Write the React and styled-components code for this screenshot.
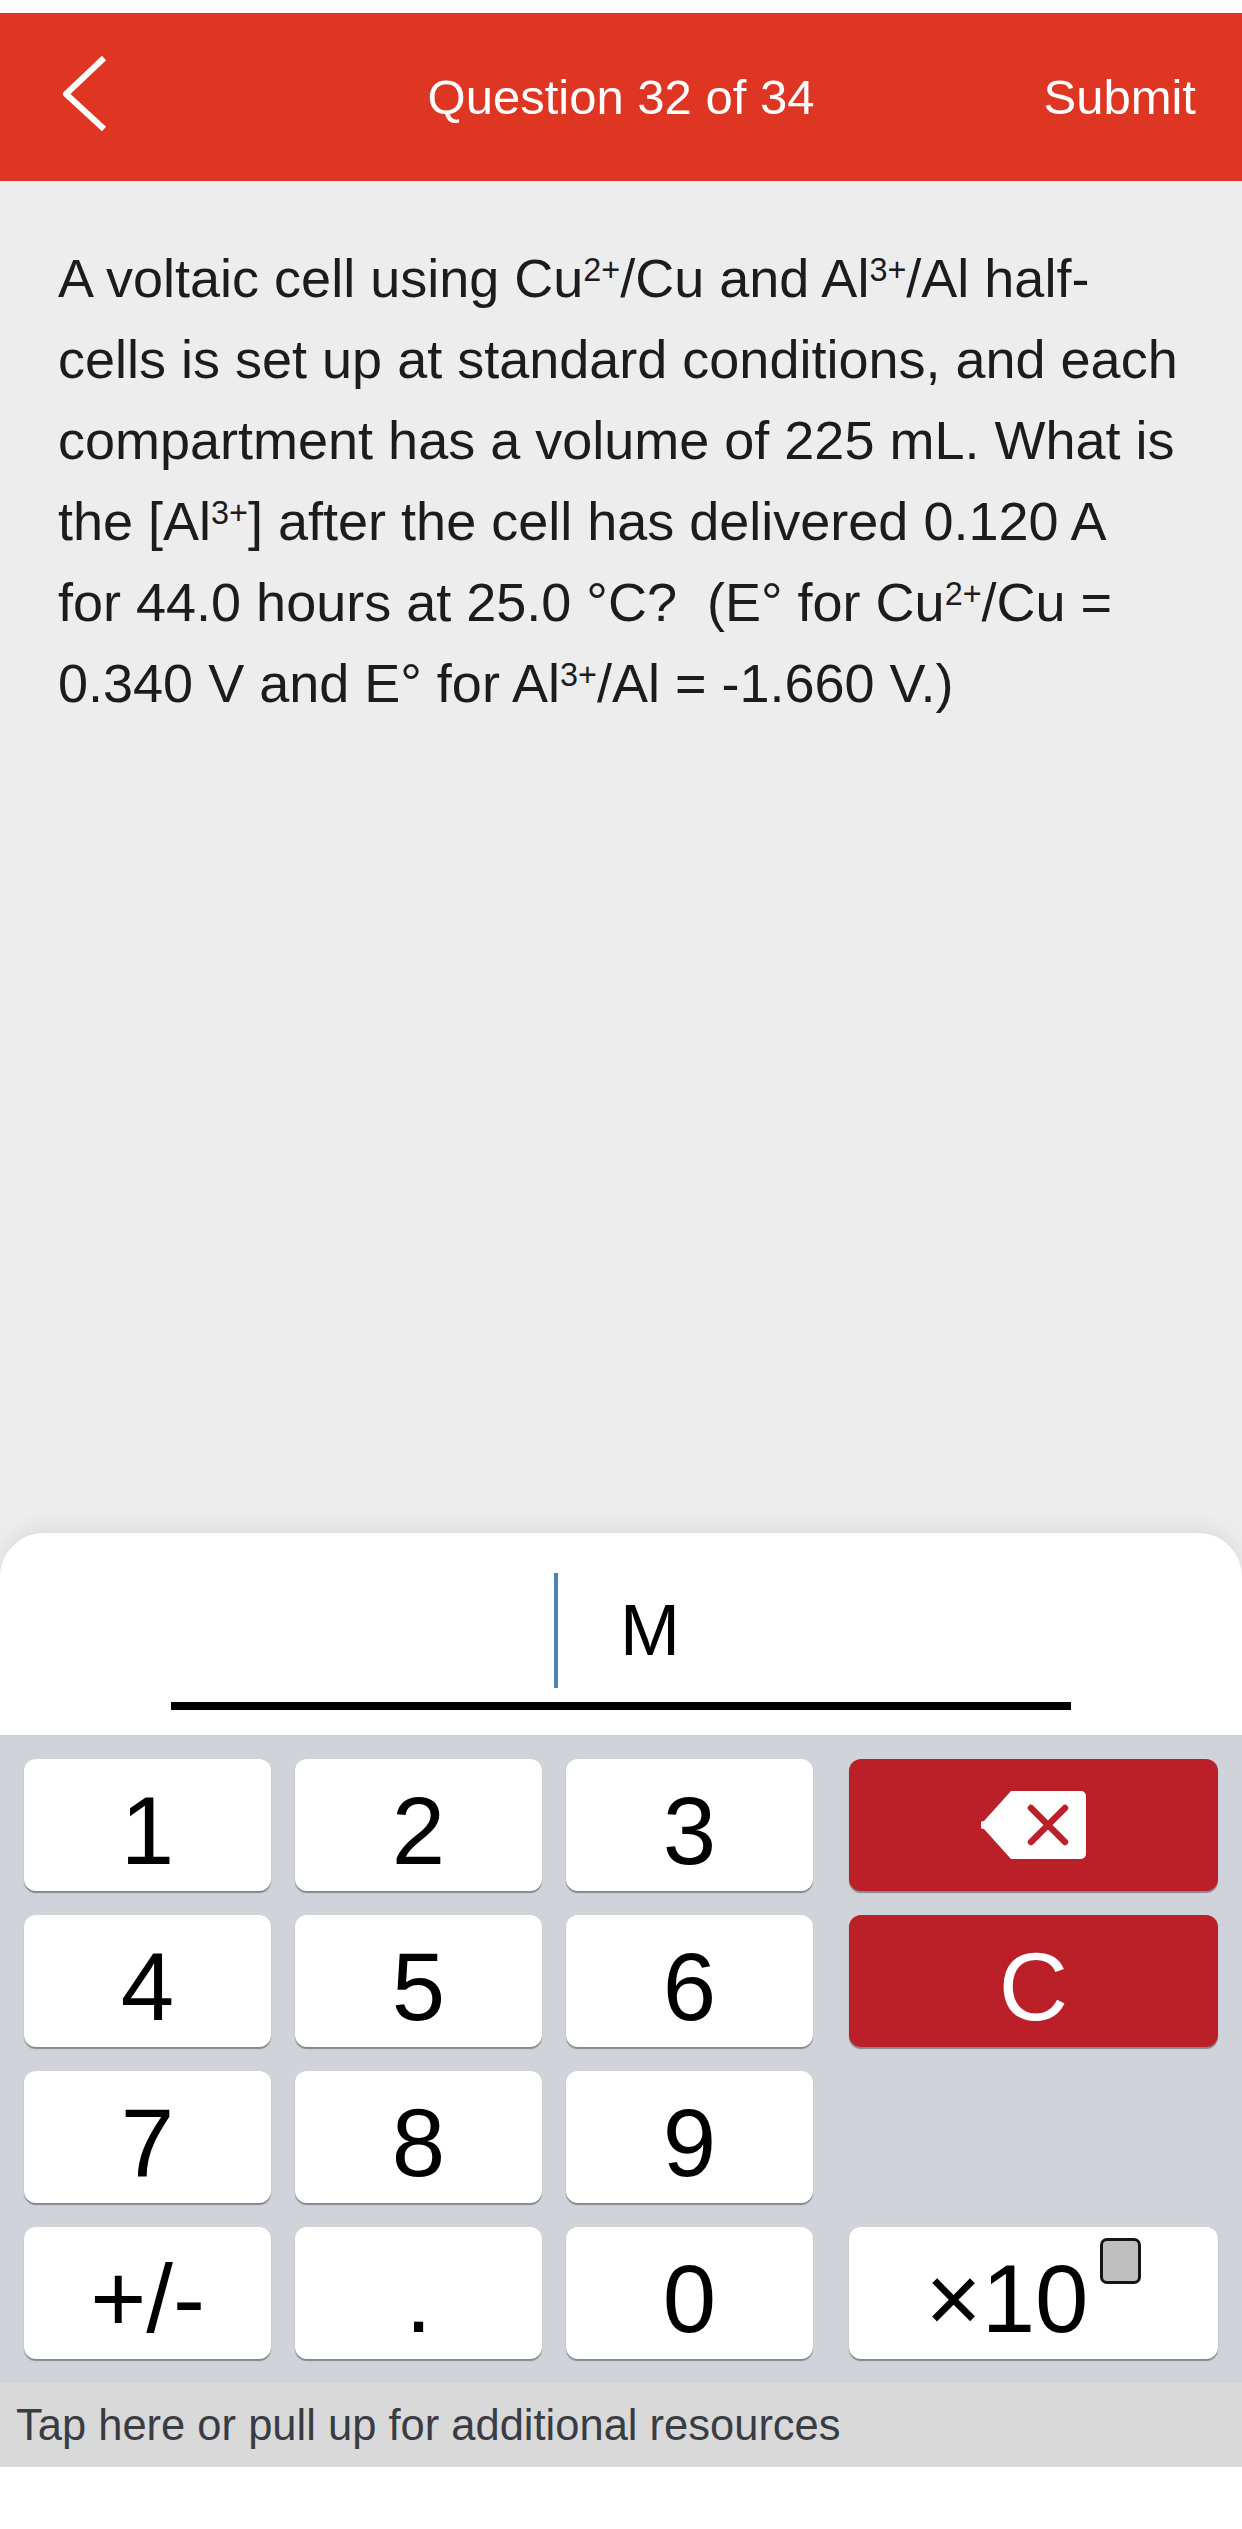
import React from 'react'
import styled, { createGlobalStyle } from 'styled-components'

const GlobalStyle = createGlobalStyle`
  html, body {
    margin: 0;
    padding: 0;
    background: #ffffff;
  }
  body {
    font-family: "Liberation Sans", Arial, sans-serif;
  }
`

const Page = styled.div`
  width: 1242px;
  height: 2529px;
  display: flex;
  flex-direction: column;
  background: #ffffff;
  overflow: hidden;
`

const StatusStrip = styled.div`
  height: 13px;
  background: #ffffff;
`

const Header = styled.header`
  height: 168px;
  background: #de3623;
  display: grid;
  grid-template-columns: 1fr auto 1fr;
  align-items: center;
  color: #ffffff;
  font-size: 49px;
`

const BackButton = styled.div`
  justify-self: start;
  margin-left: 60px;
  display: flex;
`

const Title = styled.div`
  white-space: nowrap;
`

const SubmitLink = styled.div`
  justify-self: end;
  margin-right: 46px;
`

const Main = styled.main`
  flex: 1;
  background: #ededed;
  display: flex;
  flex-direction: column;
`

const Question = styled.p`
  margin: 0;
  padding: 57px 58px 0;
  font-size: 54px;
  line-height: 81px;
  color: #1c1c1e;
  white-space: nowrap;
`

const Sup = styled.sup`
  font-size: 0.6em;
  line-height: 0;
  vertical-align: 0.48em;
`

const AnswerPanel = styled.section`
  margin-top: auto;
  height: 202px;
  box-sizing: border-box;
  padding-top: 40px;
  background: #ffffff;
  border-radius: 44px 44px 0 0;
  box-shadow: 0 -6px 22px rgba(0, 0, 0, 0.07);
`

const InputRow = styled.div`
  height: 115px;
  display: flex;
  justify-content: center;
  align-items: flex-start;
  padding-right: 8px;
`

const Caret = styled.div`
  width: 4px;
  height: 115px;
  background: #4b82b8;
`

const Unit = styled.span`
  margin-left: 62px;
  margin-top: 21px;
  font-size: 72px;
  line-height: 72px;
  color: #000000;
`

const Underline = styled.div`
  width: 900px;
  height: 8px;
  margin: 14px auto 0;
  background: #000000;
`

const Keypad = styled.div`
  background: #d1d3da;
  padding: 24px;
  display: grid;
  grid-template-columns: 247px 247px 247px 1fr;
  grid-auto-rows: 132px;
  column-gap: 24px;
  row-gap: 24px;
`

const Key = styled.div`
  box-sizing: border-box;
  width: ${p => (p.$wide ? '369px' : 'auto')};
  justify-self: ${p => (p.$wide ? 'end' : 'stretch')};
  display: flex;
  align-items: center;
  justify-content: center;
  padding-top: 12px;
  border-radius: 12px;
  background: ${p => (p.$red ? '#bb2029' : '#ffffff')};
  color: ${p => (p.$red ? '#ffffff' : '#000000')};
  box-shadow: 0 2px 1px rgba(70, 72, 78, 0.55);
  font-size: 96px;
  line-height: 96px;
`

const IconKey = styled(Key)`
  padding-top: 0;
`

const EmptyCell = styled.div``

const Exponent = styled.div`
  display: flex;
  align-items: flex-start;
`

const ExpBox = styled.div`
  width: 41px;
  height: 46px;
  box-sizing: border-box;
  margin-top: -13px;
  margin-left: 12px;
  border: 3px solid #151515;
  border-radius: 7px;
  background: #bfbfbf;
`

const ResourceBar = styled.div`
  height: 84px;
  background: #d9d9d9;
  display: flex;
  align-items: center;
  padding-left: 16px;
  font-size: 43.5px;
  color: #3a3c44;
`

const Footer = styled.div`
  height: 62px;
  background: #ffffff;
`

const Chevron = () => (
  <svg width="50" height="86" viewBox="0 0 50 86">
    <path
      d="M44 4 L6 40 L44 75"
      fill="none"
      stroke="#ffffff"
      strokeWidth="6"
      strokeLinejoin="round"
    />
  </svg>
)

const BackspaceIcon = () => (
  <svg width="106" height="70" viewBox="0 0 106 70">
    <path
      d="M30 1 H100 A5 5 0 0 1 105 6 V64 A5 5 0 0 1 100 69 H30 L3 39 A4 4 0 0 1 3 31 Z"
      fill="#ffffff"
    />
    <path
      d="M50 18 L84 52 M84 18 L50 52"
      stroke="#bb2029"
      strokeWidth="6.5"
      strokeLinecap="round"
    />
  </svg>
)

const App = () => {
  return (
    <Page>
      <GlobalStyle />
      <StatusStrip />
      <Header>
        <BackButton>
          <Chevron />
        </BackButton>
        <Title>Question 32 of 34</Title>
        <SubmitLink>Submit</SubmitLink>
      </Header>
      <Main>
        <Question>
          A voltaic cell using Cu<Sup>2+</Sup>/Cu and Al<Sup>3+</Sup>/Al half-
          <br />
          cells is set up at standard conditions, and each
          <br />
          compartment has a volume of 225 mL. What is
          <br />
          the [Al<Sup>3+</Sup>] after the cell has delivered 0.120 A
          <br />
          for 44.0 hours at 25.0 °C?&nbsp; (E° for Cu<Sup>2+</Sup>/Cu =
          <br />
          0.340 V and E° for Al<Sup>3+</Sup>/Al = -1.660 V.)
        </Question>
        <AnswerPanel>
          <InputRow>
            <Caret />
            <Unit>M</Unit>
          </InputRow>
          <Underline />
        </AnswerPanel>
      </Main>
      <Keypad>
        <Key>1</Key>
        <Key>2</Key>
        <Key>3</Key>
        <IconKey $red $wide>
          <BackspaceIcon />
        </IconKey>
        <Key>4</Key>
        <Key>5</Key>
        <Key>6</Key>
        <Key $red $wide>C</Key>
        <Key>7</Key>
        <Key>8</Key>
        <Key>9</Key>
        <EmptyCell />
        <Key>+/-</Key>
        <Key>.</Key>
        <Key>0</Key>
        <Key $wide>
          <Exponent>
            <span>×10</span>
            <ExpBox />
          </Exponent>
        </Key>
      </Keypad>
      <ResourceBar>Tap here or pull up for additional resources</ResourceBar>
      <Footer />
    </Page>
  )
}

export default App
